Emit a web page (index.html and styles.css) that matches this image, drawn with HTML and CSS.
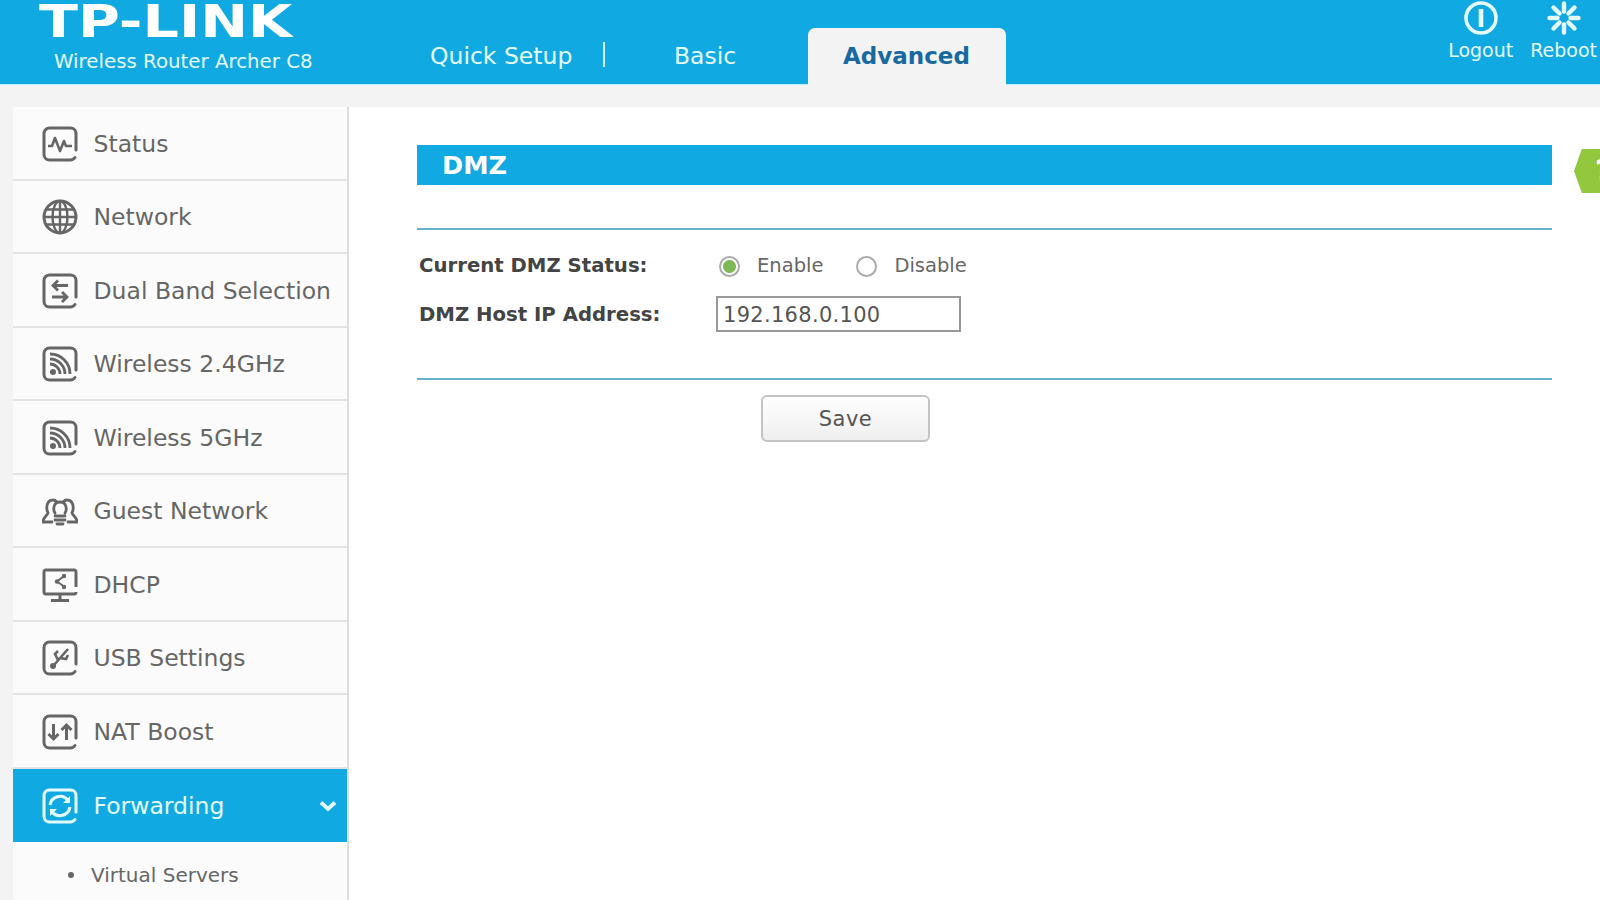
FILE: index.html
```html
<!DOCTYPE html>
<html lang="en">
<head>
  <meta charset="UTF-8">
  <title>TP-LINK Wireless Router Archer C8</title>
  <link rel="stylesheet" href="styles.css">
</head>
<body>
  <svg class="defs" width="0" height="0">
    <symbol id="frame" viewBox="0 0 36 36">
      <path d="M34 24V7.500A5.500 5.500 0 0 0 28.500 2H7.500A5.500 5.500 0 0 0 2 7.500v21A5.500 5.500 0 0 0 7.500 34h21a5.500 5.500 0 0 0 4.500-2.500" fill="none" stroke="currentColor" stroke-width="3" stroke-linecap="round"/>
    </symbol>
  </svg>

  <!-- Header -->
  <header class="top">
    <div class="brand">
      <div class="logo">TP-LINK</div>
      <div class="model">Wireless Router Archer C8</div>
    </div>
    <nav class="tabs">
      <a class="tab tab-quick" href="#">Quick Setup</a>
      <a class="tab tab-basic" href="#">Basic</a>
      <a class="tab tab-active" href="#">Advanced</a>
    </nav>
    <div class="tools">
      <a class="tool" href="#">
        <svg width="34" height="34" viewBox="0 0 34 34"><circle cx="17" cy="17" r="15" fill="none" stroke="currentColor" stroke-width="3.600"/><path d="M17 8v18" stroke="currentColor" stroke-width="4.600"/></svg>
        <span>Logout</span>
      </a>
      <a class="tool" href="#">
        <svg width="34" height="34" viewBox="0 0 34 34" stroke="currentColor" stroke-width="4.400" stroke-linecap="round"><path d="M17 2.500v8M17 23.500v8M2.500 17h8M23.500 17h8M6.500 6.500l6 6M21.500 21.500l6 6M27.500 6.500l-6 6M12.500 21.500l-6 6"/></svg>
        <span>Reboot</span>
      </a>
    </div>
  </header>

  <div class="main">
    <!-- Sidebar -->
    <aside class="side">
      <a class="item" href="#">
        <span class="ico"><svg width="36" height="36"><use href="#frame"/><path d="M6 20h4l3-8 5 13 4-10 2 5h6" fill="none" stroke="currentColor" stroke-width="2.600" stroke-linejoin="round"/></svg></span>
        Status
      </a>
      <a class="item" href="#">
        <span class="ico"><svg width="36" height="36" fill="none" stroke="currentColor" stroke-width="2.400"><circle cx="18" cy="18" r="16" stroke-width="3"/><ellipse cx="18" cy="18" rx="7.500" ry="16"/><path d="M18 2v32M2 18h32M5 10.500h26M5 25.500h26"/></svg></span>
        Network
      </a>
      <a class="item" href="#">
        <span class="ico"><svg width="36" height="36"><use href="#frame"/><path d="M26 12.500H11M16 7.500l-5 5 5 5M10 24h15M20 19l5 5-5 5" fill="none" stroke="currentColor" stroke-width="2.800"/></svg></span>
        Dual Band Selection
      </a>
      <a class="item" href="#">
        <span class="ico"><svg width="36" height="36" fill="none" stroke="currentColor"><use href="#frame"/><circle cx="11" cy="26" r="3" fill="currentColor" stroke="none"/><path d="M8 18a10 10 0 0 1 10 10M8 13a15 15 0 0 1 15 15M8 8a20 20 0 0 1 20 20" stroke-width="2.800"/></svg></span>
        Wireless 2.4GHz
      </a>
      <a class="item" href="#">
        <span class="ico"><svg width="36" height="36" fill="none" stroke="currentColor"><use href="#frame"/><circle cx="11" cy="26" r="3" fill="currentColor" stroke="none"/><path d="M8 18a10 10 0 0 1 10 10M8 13a15 15 0 0 1 15 15M8 8a20 20 0 0 1 20 20" stroke-width="2.800"/></svg></span>
        Wireless 5GHz
      </a>
      <a class="item" href="#">
        <span class="ico"><svg width="36" height="36" fill="none" stroke="currentColor" stroke-width="2.800" stroke-linecap="round"><path d="M10 29H1c0-5 4-6 5-9-2-4-2-13 5-13 2 0 3 1 4 2M26 29h9c0-5-4-6-5-9 2-4 2-13-5-13-2 0-3 1-4 2"/><path d="M13 20c-2-3-2-11 5-11s7 8 5 11M13 23h10M13 27h10M15 31h6"/></svg></span>
        Guest Network
      </a>
      <a class="item" href="#">
        <span class="ico"><svg width="36" height="36" fill="none" stroke="currentColor" stroke-width="3"><path d="M34 20V5a2 2 0 0 0-2-2H4a2 2 0 0 0-2 2v20a2 2 0 0 0 2 2h28a2 2 0 0 0 2-2"/><path d="M18 27v6M9 33.500h18"/><path d="M22 9l-7 5.500 7 5" stroke-width="2"/><circle cx="15" cy="14.500" r="2.200" fill="currentColor" stroke="none"/><circle cx="22" cy="9" r="2.200" fill="currentColor" stroke="none"/><circle cx="22" cy="20" r="2.200" fill="currentColor" stroke="none"/></svg></span>
        DHCP
      </a>
      <a class="item" href="#">
        <span class="ico"><svg width="36" height="36" fill="none" stroke="currentColor" stroke-width="2.600"><use href="#frame"/><circle cx="11" cy="26" r="3" fill="currentColor" stroke="none"/><path d="M12 25L26 9M16 20l-3-6 3-3M18 18l6 1 2-4"/></svg></span>
        USB Settings
      </a>
      <a class="item" href="#">
        <span class="ico"><svg width="36" height="36" fill="none" stroke="currentColor" stroke-width="3"><use href="#frame"/><path d="M11.500 10v15M6.500 20l5 5 5-5M24.500 26V11M19.500 16l5-5 5 5"/></svg></span>
        NAT Boost
      </a>
      <a class="item item-active" href="#">
        <span class="ico"><svg width="36" height="36" fill="none" stroke="currentColor" stroke-width="3"><use href="#frame"/><path d="M8 17a10 10 0 0 1 18-4.500M28 19a10 10 0 0 1-18 4.500"/><path d="M28 8v7h-7zM8 28v-7h7z" stroke="none" fill="currentColor"/></svg></span>
        Forwarding
        <svg class="chev" width="18" height="12" viewBox="0 0 18 12"><path d="M2 2.500l7 6.500 7-6.500" fill="none" stroke="currentColor" stroke-width="3.800"/></svg>
      </a>
      <a class="sub" href="#">Virtual Servers</a>
    </aside>

    <!-- DMZ settings -->
    <section class="content">
      <h2 class="title">DMZ</h2>
      <form class="form">
        <div class="row row-status">
          <label class="lbl">Current DMZ Status:</label>
          <label class="opt"><input type="radio" name="dmz" checked> Enable</label>
          <label class="opt"><input type="radio" name="dmz"> Disable</label>
        </div>
        <div class="row">
          <label class="lbl" for="host">DMZ Host IP Address:</label>
          <input class="ip" id="host" type="text" value="192.168.0.100">
        </div>
      </form>
      <div class="actions">
        <button class="save" type="button">Save</button>
      </div>
    </section>

    <div class="help"><span>?</span></div>
  </div>
</body>
</html>
```

FILE: styles.css
```css
/* General */
html, body {
  margin: 0;
  padding: 0;
  height: 900px;
  overflow: hidden;
}
body {
  font-family: "DejaVu Sans", Verdana, sans-serif;
  background-color: #f3f3f3;
  color: #666;
}
a {
  text-decoration: none;
  color: inherit;
}
.defs {
  position: absolute;
}

/* Header */
.top {
  display: flex;
  height: 84px;
  background-color: #11a9e1;
  border-bottom: 1px solid #bdf0ff;
  color: #e4fbff;
}
.brand {
  width: 430px;
  flex: none;
}
.logo {
  margin-left: 39px;
  height: 44px;
  font-size: 45px;
  line-height: 44px;
  font-weight: bold;
  color: #fff;
  transform: scaleX(1.27);
  transform-origin: left center;
}
.model {
  margin: 6px 0 0 54px;
  font-size: 19.800px;
  line-height: 24px;
}
.tabs {
  display: flex;
  align-items: flex-end;
  flex: 1;
}
.tab {
  font-size: 23.500px;
  line-height: 56px;
}
.tab-quick {
  position: relative;
  width: 173px;
}
.tab-quick::after {
  content: "";
  position: absolute;
  left: 173px;
  top: 14px;
  width: 2px;
  height: 25px;
  background-color: #d5f5ff;
}
.tab-basic {
  margin-left: 71px;
  width: 134px;
}
.tab-active {
  width: 198px;
  height: 57px;
  box-sizing: border-box;
  padding-left: 35px;
  background-color: #f3f3f3;
  border-radius: 7px 7px 0 0;
  margin-bottom: -1px;
  color: #17699f;
  font-size: 23px;
  font-weight: bold;
}
.tools {
  display: flex;
  gap: 17px;
  margin-right: 3px;
  padding-top: 1px;
}
.tool {
  display: flex;
  flex-direction: column;
  align-items: center;
  font-size: 19px;
  line-height: 22px;
}
.tool svg {
  margin-bottom: 4px;
}

/* Sidebar */
.main {
  display: flex;
  position: relative;
  margin-top: 22px;
}
.side {
  flex: none;
  width: 334px;
  height: 800px;
  margin-left: 13px;
  background-color: #fbfbfb;
  border-right: 2px solid #ddd;
}
.item {
  display: flex;
  align-items: center;
  gap: 15.500px;
  box-sizing: border-box;
  height: 73.500px;
  padding: 2px 10px 0 29px;
  border-bottom: 2px solid #e3e3e3;
  font-size: 23.500px;
  color: #666;
  white-space: nowrap;
}
.ico {
  display: flex;
  width: 36px;
  height: 36px;
  flex: none;
}
.item-active {
  border-bottom: 0;
  background-color: #11a9e1;
  color: #e4fbff;
}
.chev {
  margin-left: auto;
}
.sub {
  display: flex;
  align-items: center;
  gap: 17px;
  margin: 21px 0 0 55px;
  font-size: 20px;
}
.sub::before {
  content: "";
  width: 6px;
  height: 6px;
  border-radius: 50%;
  background-color: #666;
}

/* DMZ */
.content {
  flex: 1;
  margin-right: 48px;
  padding: 38px 0 0 68px;
  background-color: #fff;
  min-height: 800px;
}
.main::after {
  content: "";
  position: absolute;
  right: 0;
  top: 0;
  width: 48px;
  height: 100%;
  background-color: #fff;
  z-index: -1;
}
.title {
  margin: 0;
  height: 40px;
  padding-left: 25px;
  background-color: #11a9e1;
  color: #fff;
  font-size: 25.500px;
  line-height: 40px;
}
.form {
  margin-top: 43px;
  padding: 17px 0 45px 2px;
  border-top: 2px solid #68b1cf;
  border-bottom: 2px solid #68b1cf;
}
.row {
  display: flex;
  align-items: center;
  height: 38px;
}
.row-status {
  height: 36px;
  margin-bottom: 12px;
}
.lbl {
  width: 297px;
  font-size: 19.700px;
  font-weight: bold;
  color: #444;
}
.opt {
  display: flex;
  align-items: center;
  margin: 0 30px 0 3px;
  font-size: 19.500px;
}
.opt input {
  appearance: none;
  width: 21px;
  height: 21px;
  margin: 2px 17px 0 0;
  border: 2px solid #aaa;
  border-radius: 50%;
  background-color: #fff;
}
.opt input:checked {
  background: radial-gradient(circle, #7fb957 0 6px, #fff 7px);
}
.ip {
  box-sizing: border-box;
  width: 245px;
  height: 36px;
  padding: 2px 5px 0;
  border: 2px solid #999;
  font-family: inherit;
  font-size: 21px;
  color: #555;
  letter-spacing: 0.3px;
}
.actions {
  padding: 15px 0 0 344px;
}
.save {
  width: 169px;
  height: 47px;
  border: 2px solid #c4c4c4;
  border-radius: 6px;
  background: linear-gradient(#fff, #efefef);
  font-family: inherit;
  font-size: 21px;
  letter-spacing: 0.5px;
  color: #555;
}

/* Help tab */
.help {
  position: absolute;
  right: 0;
  top: 42px;
  width: 26px;
  height: 44px;
  background-color: #93c83e;
  clip-path: polygon(30% 0, 100% 0, 100% 100%, 30% 100%, 0 50%);
  overflow: hidden;
  color: #fff;
  font-size: 30px;
  font-weight: bold;
  line-height: 44px;
}
.help span {
  margin-left: 21px;
}
```
